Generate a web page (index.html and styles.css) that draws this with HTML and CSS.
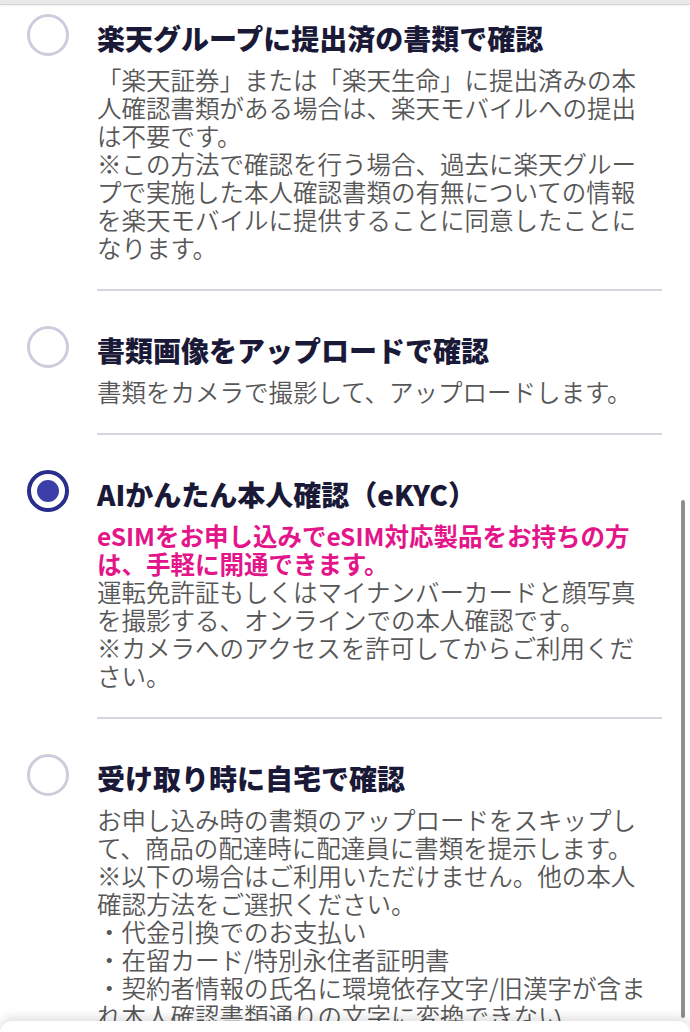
FILE: index.html
```html
<!DOCTYPE html>
<html lang="ja">
<head>
<meta charset="utf-8">
<title>本人確認方法</title>
<link rel="stylesheet" href="styles.css">
</head>
<body>
<div class="topbar"></div>
<main class="list">
  <div class="option first">
    <div class="radio-col"><span class="radio"></span></div>
    <div class="content">
      <h2 class="title">楽天グループに提出済の書類で確認</h2>
      <p class="desc">「楽天証券」または「楽天生命」に提出済みの本人確認書類がある場合は、楽天モバイルへの提出は不要です。<br>※この方法で確認を行う場合、過去に楽天グループで実施した本人確認書類の有無についての情報を楽天モバイルに提供することに同意したことになります。</p>
    </div>
  </div>
  <div class="option">
    <div class="radio-col"><span class="radio"></span></div>
    <div class="content">
      <h2 class="title">書類画像をアップロードで確認</h2>
      <p class="desc">書類をカメラで撮影して、アップロードします。</p>
    </div>
  </div>
  <div class="option">
    <div class="radio-col"><span class="radio checked"></span></div>
    <div class="content">
      <h2 class="title">AIかんたん本人確認（eKYC）</h2>
      <p class="desc highlight">eSIMをお申し込みでeSIM対応製品をお持ちの方は、手軽に開通できます。</p>
      <p class="desc tight">運転免許証もしくはマイナンバーカードと顔写真を撮影する、オンラインでの本人確認です。<br>※カメラへのアクセスを許可してからご利用ください。</p>
    </div>
  </div>
  <div class="option">
    <div class="radio-col"><span class="radio"></span></div>
    <div class="content">
      <h2 class="title">受け取り時に自宅で確認</h2>
      <p class="desc">お申し込み時の書類のアップロードをスキップして、商品の配達時に配達員に書類を提示します。<br>※以下の場合はご利用いただけません。他の本人確認方法をご選択ください。<br>・代金引換でのお支払い<br>・在留カード/特別永住者証明書<br>・契約者情報の氏名に環境依存文字/旧漢字が含まれ本人確認書類通りの文字に変換できない</p>
    </div>
  </div>
</main>
<div class="scrollbar"></div>
<div class="bottom-sheet"></div>
</body>
</html>
```
FILE: styles.css
```css
html, body {
  margin: 0;
  padding: 0;
  height: 1032px;
  overflow: hidden;
  background: #ffffff;
}

body {
  font-family: "Noto Sans CJK JP", "Noto Sans", sans-serif;
  color: #555555;
}

.topbar {
  height: 4px;
  background: #e9e9e9;
  border-bottom: 1px solid #d4d4d4;
  box-shadow: 0 1px 3px rgba(0, 0, 0, 0.06);
}

.list {
  display: flex;
  flex-direction: column;
}

.option {
  display: flex;
  padding-top: 35px;
}

.option.first {
  padding-top: 9px;
}

.radio-col {
  width: 70px;
  padding-left: 27px;
  flex: none;
}

.radio {
  display: flex;
  align-items: center;
  justify-content: center;
  box-sizing: border-box;
  width: 42px;
  height: 42px;
  border: 3px solid #cdccdb;
  border-radius: 50%;
  background: #ffffff;
}

.radio.checked {
  border: 4px solid #2b2d8c;
}

.radio.checked::after {
  content: "";
  width: 22px;
  height: 22px;
  border-radius: 50%;
  background: #3c3fa8;
}

.content {
  width: 565px;
  flex: none;
  padding-top: 6px;
  padding-bottom: 27px;
  border-bottom: 2px solid #d6d6e0;
}

.title {
  margin: 0;
  font-size: 28px;
  line-height: 36px;
  font-weight: 900;
  color: #1a1a38;
  white-space: nowrap;
}

.desc {
  margin: 10px 0 0;
  width: 551px;
  font-size: 24.5px;
  line-height: 28px;
  font-weight: 350;
  color: #575757;
}

.desc.tight {
  margin-top: 0;
}

.desc.highlight {
  color: #e4158a;
  font-weight: 700;
}

.scrollbar {
  position: fixed;
  right: 5px;
  top: 500px;
  width: 4px;
  height: 518px;
  border-radius: 2px;
  background: #8f8f8f;
}

.bottom-sheet {
  position: fixed;
  left: 0;
  right: 0;
  top: 1021px;
  height: 30px;
  background: #ffffff;
  border-radius: 12px 12px 0 0;
  box-shadow: 0 -4px 10px rgba(0, 0, 0, 0.12);
}
```
